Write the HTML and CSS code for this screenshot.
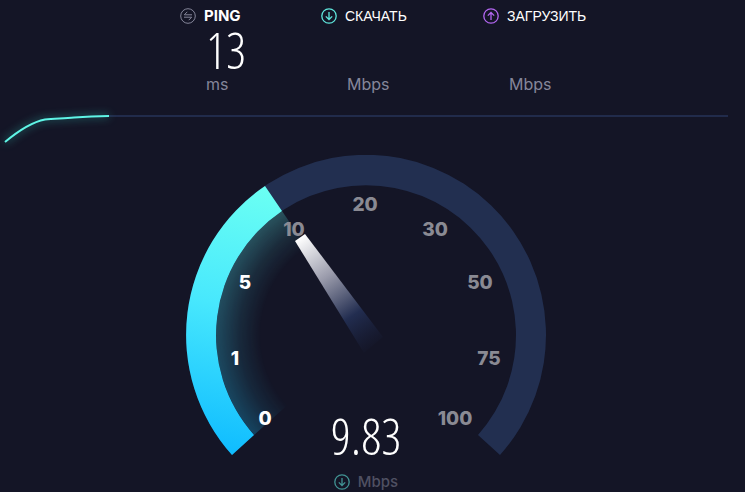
FILE: index.html
```html
<!DOCTYPE html>
<html lang="ru">
<head>
    <meta charset="UTF-8">
    <meta name="viewport" content="width=device-width, initial-scale=1.0">
    <title>Speedtest</title>
    <link rel="stylesheet" href="styles.css">
</head>
<body>
    <main class="speedtest">
        <header class="results">
            <section class="result">
                <h2 class="result-title result-title-ping">
                    <svg class="icon icon-ping" viewBox="0 0 16 16" aria-hidden="true">
                        <circle cx="8" cy="8" r="7.3"/>
                        <path d="M12 6.8H4.3L7.3 3.8M4 9.2h7.7L8.7 12.2"/>
                    </svg>
                    PING
                </h2>
                <div class="result-value">13</div>
                <div class="result-unit">ms</div>
            </section>
            <section class="result">
                <h2 class="result-title">
                    <svg class="icon icon-download" viewBox="0 0 16 16" aria-hidden="true">
                        <circle cx="8" cy="8" r="7.2"/>
                        <path d="M8 4v7.4M4.8 8.4L8 11.5l3.2-3.1"/>
                    </svg>
                    СКАЧАТЬ
                </h2>
                <div class="result-value"></div>
                <div class="result-unit">Mbps</div>
            </section>
            <section class="result">
                <h2 class="result-title">
                    <svg class="icon icon-upload" viewBox="0 0 16 16" aria-hidden="true">
                        <circle cx="8" cy="8" r="7.2"/>
                        <path d="M8 12V4.6M4.8 7.6L8 4.5l3.2 3.1"/>
                    </svg>
                    ЗАГРУЗИТЬ
                </h2>
                <div class="result-value"></div>
                <div class="result-unit">Mbps</div>
            </section>
        </header>

        <div class="progress">
            <svg class="progress-line" viewBox="0 0 109 32" aria-hidden="true">
                <path d="M5 28C17 18 32 8 45 5.5C54 4.5 64 4.6 74 3.6C86 2.5 96 2 109 2"/>
            </svg>
            <div class="progress-track"></div>
        </div>

        <section class="gauge">
            <svg class="gauge-dial" viewBox="-180 -180 360 337" role="img" aria-label="9.83 Mbps">
                <defs>
                    <linearGradient id="fill" gradientUnits="userSpaceOnUse" x1="-80" y1="-140" x2="-134" y2="120">
                        <stop offset="0" stop-color="#6afff3"/>
                        <stop offset=".45" stop-color="#48e8fd"/>
                        <stop offset="1" stop-color="#0fbcff"/>
                    </linearGradient>
                    <radialGradient id="fade" gradientUnits="userSpaceOnUse" cx="0" cy="0" r="150">
                        <stop offset=".7" stop-color="#fff" stop-opacity="0"/>
                        <stop offset=".84" stop-color="#fff" stop-opacity=".1"/>
                        <stop offset="1" stop-color="#fff" stop-opacity=".27"/>
                    </radialGradient>
                    <mask id="glow" maskUnits="userSpaceOnUse" x="-180" y="-180" width="360" height="337">
                        <circle r="150" fill="url(#fade)"/>
                    </mask>
                    <linearGradient id="needle" gradientUnits="userSpaceOnUse" x1="-66" y1="-97" x2="9" y2="14">
                        <stop offset="0" stop-color="#fff"/>
                        <stop offset=".35" stop-color="#9a9bab"/>
                        <stop offset=".7" stop-color="#222d50"/>
                        <stop offset="1" stop-color="#1b2442" stop-opacity="0"/>
                    </linearGradient>
                </defs>
                <path class="arc" d="M-134 120A180 180 0 1 1 134 120L112 100A150 150 0 1 0 -112 100Z"/>
                <path fill="url(#fill)" d="M-134 120A180 180 0 0 1 -101 -149L-84 -124A150 150 0 0 0 -112 100Z"/>
                <path fill="url(#fill)" mask="url(#glow)" d="M0 0L-112 100A150 150 0 0 1 -84 -124Z"/>
                <g class="marks">
                    <text class="passed" x="-101" y="90">0</text>
                    <text class="passed" x="-131" y="30">1</text>
                    <text class="passed" x="-121" y="-46">5</text>
                    <text x="-72" y="-99">10</text>
                    <text x="-1" y="-124">20</text>
                    <text x="69" y="-99">30</text>
                    <text x="114" y="-46">50</text>
                    <text x="123" y="30">75</text>
                    <text x="89" y="90">100</text>
                </g>
                <path fill="url(#needle)" d="M-71 -94L-61 -101L17 2L-2 18Z"/>
            </svg>
            <div class="reading">
                <div class="reading-value">9.83</div>
                <div class="reading-unit">
                    <svg class="icon icon-download" viewBox="0 0 16 16" aria-hidden="true">
                        <circle cx="8" cy="8" r="7.2"/>
                        <path d="M8 4v7.4M4.8 8.4L8 11.5l3.2-3.1"/>
                    </svg>
                    Mbps
                </div>
            </div>
        </section>
    </main>
</body>
</html>
```
FILE: styles.css
```css
* { box-sizing: border-box; }
body { margin: 0; background: #141526; color: #fff; font-family: Inter, "Liberation Sans", sans-serif; }
.speedtest { padding: 8px 13px 0 0; }

.icon { flex: none; width: 16px; height: 16px; fill: none; stroke-width: 1.3; }
.icon-ping { stroke: #85869a; stroke-width: 1; }
.icon-download { stroke: #5fe6dc; }
.icon-upload { stroke: #b266f0; }

.results { display: grid; grid-template-columns: 141px 162px 107px; justify-content: center; padding-left: 38px; }
.result-title { display: flex; align-items: center; gap: 8px; margin: 0; font: 14px/16px "Liberation Sans", Arial, sans-serif; white-space: nowrap; }
.result-title-ping { font-family: Inter, sans-serif; font-size: 15px; font-weight: bold; }
.result-value { height: 52px; padding-left: 26px; font: 300 50px/52px "Open Sans Condensed Light", "Roboto Condensed", sans-serif; }
.result-unit { padding-left: 26px; font-size: 16px; line-height: 16px; color: #85869a; }

.progress { display: flex; align-items: flex-start; margin-top: 22px; }
.progress-line { flex: none; width: 109px; height: 32px; overflow: visible; fill: none; stroke: #5ff5e6; stroke-width: 2; filter: drop-shadow(0 0 4px #2ba59d); }
.progress-track { flex: 1; height: 2px; margin: 1px 4px 0 0; background: #212b4b; }

.gauge { display: grid; justify-items: center; margin-top: 9px; }
.gauge-dial { grid-area: 1 / 1; width: 360px; height: 337px; }
.arc { fill: #222f50; }
.marks { fill: #8a8a93; font-size: 19px; font-weight: 800; text-anchor: middle; }
.passed { fill: #fff; }

.reading { grid-area: 1 / 1; align-self: end; }
.reading-value { text-align: center; font: 300 50px/52px "Open Sans Condensed Light", "Roboto Condensed", sans-serif; }
.reading-unit { display: flex; align-items: center; justify-content: center; gap: 8px; margin-top: 10px; font-size: 15px; font-weight: 500; line-height: 20px; color: #4f5062; }
.reading-unit .icon { opacity: .6; }
```
